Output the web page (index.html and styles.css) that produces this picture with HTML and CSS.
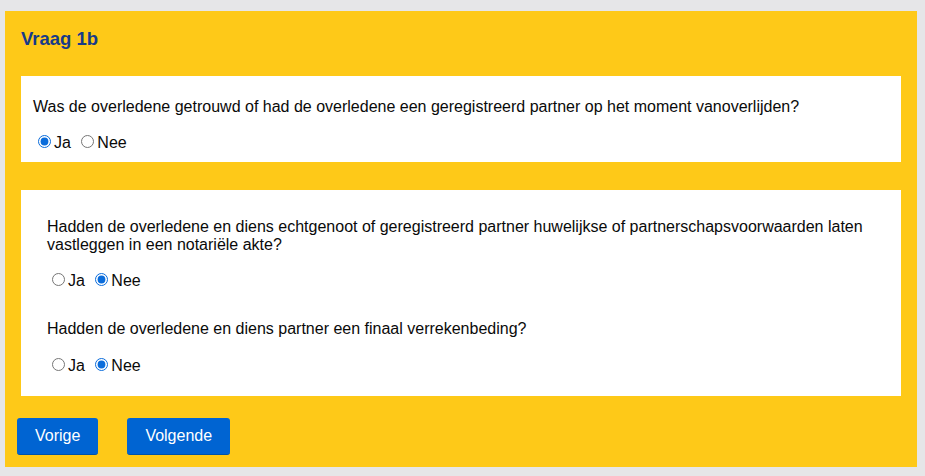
FILE: index.html
```html
<!DOCTYPE html>
<html lang="nl">
<head>
<meta charset="utf-8">
<title>Vraag 1b</title>
<link rel="stylesheet" href="styles.css">
</head>
<body>
<div class="panel">
  <h2 class="title">Vraag 1b</h2>
  <div class="card card-first">
    <p class="question">Was de overledene getrouwd of had de overledene een geregistreerd partner op het moment vanoverlijden?</p>
    <div class="options">
      <input type="radio" name="q1" id="q1ja" checked><label for="q1ja">Ja</label>
      <input type="radio" name="q1" id="q1nee"><label for="q1nee">Nee</label>
    </div>
  </div>
  <div class="card card-second">
    <div class="sub">
      <p class="question">Hadden de overledene en diens echtgenoot of geregistreerd partner huwelijkse of partnerschapsvoorwaarden laten vastleggen in een notariële akte?</p>
      <div class="options">
        <input type="radio" name="q2" id="q2ja"><label for="q2ja">Ja</label>
        <input type="radio" name="q2" id="q2nee" checked><label for="q2nee">Nee</label>
      </div>
      <p class="question q-next">Hadden de overledene en diens partner een finaal verrekenbeding?</p>
      <div class="options">
        <input type="radio" name="q3" id="q3ja"><label for="q3ja">Ja</label>
        <input type="radio" name="q3" id="q3nee" checked><label for="q3nee">Nee</label>
      </div>
    </div>
  </div>
  <div class="buttons">
    <button class="btn" type="button">Vorige</button>
    <button class="btn" type="button">Volgende</button>
  </div>
</div>
</body>
</html>
```
FILE: styles.css
```css
html, body {
  margin: 0;
  padding: 0;
  background: #e6e6e8;
}
body {
  font-family: "Liberation Sans", Arial, sans-serif;
  font-size: 16px;
  color: #0a0a0a;
}
.panel {
  margin: 11px 8px 0 5px;
  height: 456px;
  box-sizing: border-box;
  background: #fec918;
  padding: 17px 16px 0 16px;
}
.title {
  margin: 0;
  font-size: 18.5px;
  font-weight: bold;
  color: #173a88;
  line-height: 21px;
}
.card {
  background: #fff;
  padding: 0 12px;
}
.card-first {
  margin-top: 27px;
  padding-top: 22px;
  padding-bottom: 10px;
}
.card-second {
  margin-top: 28px;
  padding-top: 28px;
  padding-bottom: 21px;
}
.sub {
  margin-left: 14px;
}
.question {
  margin: 0 0 16px 0;
  line-height: 18px;
}
.card-second .q-next {
  margin-top: 30px;
  margin-bottom: 17px;
}
.options {
  line-height: 18px;
}
.options input {
  margin: 3px 3px 0 5px;
  accent-color: #0a6cdb;
}
.options label {
  margin-right: 1px;
}
.buttons {
  display: flex;
  gap: 29px;
  margin-top: 22px;
  margin-left: -4px;
}
.btn {
  font-family: "Liberation Sans", Arial, sans-serif;
  font-size: 16px;
  color: #fff;
  background: #0064d2;
  border: 0;
  border-bottom: 1px solid #0053a8;
  border-radius: 3px;
  height: 37px;
  padding: 0 18px;
  cursor: pointer;
}
```
